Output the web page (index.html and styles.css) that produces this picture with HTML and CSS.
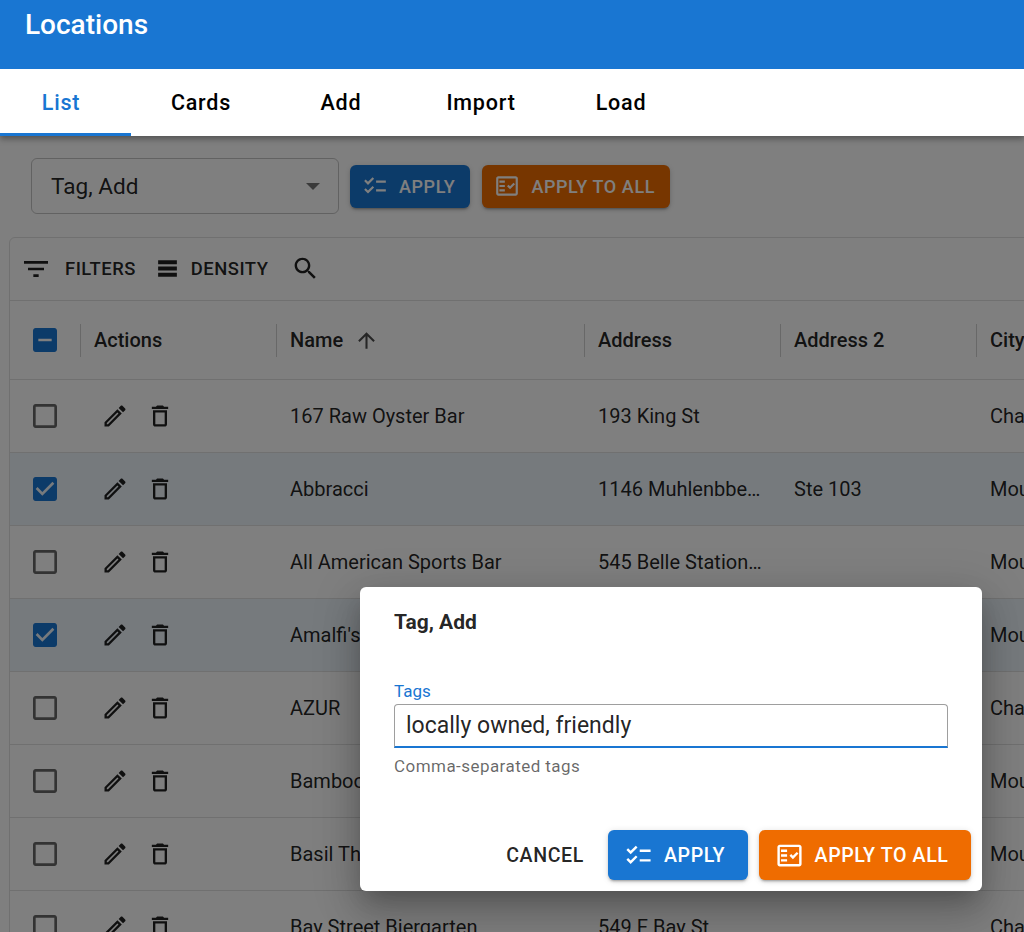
FILE: index.html
```html
<!DOCTYPE html>
<html lang="en">
<head>
  <meta charset="UTF-8">
  <title>Locations</title>
  <link rel="stylesheet" href="styles.css">
</head>
<body>
  <svg class="icon-defs" aria-hidden="true">
    <symbol id="i-edit" viewBox="0 0 24 24"><path d="m14.06 9.02.92.92L5.92 19H5v-.92l9.06-9.06M17.66 3c-.25 0-.51.1-.7.29l-1.83 1.83 3.75 3.75 1.83-1.83c.39-.39.39-1.02 0-1.41l-2.34-2.34c-.2-.2-.45-.29-.71-.29zm-3.6 3.19L3 17.25V21h3.75L17.81 9.94l-3.75-3.75z"/></symbol>
    <symbol id="i-delete" viewBox="0 0 24 24"><path d="M16 9v10H8V9h8m-1.5-6h-5l-1 1H5v2h14V4h-3.5l-1-1zM18 7H6v12c0 1.1.9 2 2 2h8c1.1 0 2-.9 2-2V7z"/></symbol>
    <symbol id="i-filter" viewBox="0 0 24 24"><path d="M10 18h4v-2h-4v2zM3 6v2h18V6H3zm3 7h12v-2H6v2z"/></symbol>
    <symbol id="i-density" viewBox="0 0 24 24"><path d="M21 8H3V4h18v4zm0 2H3v4h18v-4zm0 6H3v4h18v-4z"/></symbol>
    <symbol id="i-search" viewBox="0 0 24 24"><path d="M15.5 14h-.79l-.28-.27C15.41 12.59 16 11.11 16 9.5 16 5.91 13.09 3 9.5 3S3 5.91 3 9.5 5.91 16 9.5 16c1.61 0 3.09-.59 4.23-1.57l.27.28v.79l5 4.99L20.49 19l-4.99-5zm-6 0C7.01 14 5 11.99 5 9.5S7.01 5 9.5 5 14 7.01 14 9.5 11.99 14 9.5 14z"/></symbol>
    <symbol id="i-checklist" viewBox="0 0 24 24"><path d="M22 7h-9v2h9V7zm0 8h-9v2h9v-2zM5.54 11 2 7.46l1.41-1.41 2.12 2.12 4.24-4.24 1.41 1.41L5.54 11zm0 8L2 15.46l1.41-1.41 2.12 2.12 4.24-4.24 1.41 1.41L5.54 19z"/></symbol>
    <symbol id="i-fact" viewBox="0 0 24 24"><path d="M20 3H4c-1.1 0-2 .9-2 2v14c0 1.1.9 2 2 2h16c1.1 0 2-.9 2-2V5c0-1.1-.9-2-2-2zm0 16H4V5h16v14z"/><path d="M19.41 10.42 17.99 9l-3.17 3.17-1.41-1.42L12 12.16 14.82 15zM5 7h5v2H5zm0 4h5v2H5zm0 4h5v2H5z"/></symbol>
    <symbol id="i-arrow-up" viewBox="0 0 24 24"><path d="M4 12l1.41 1.41L11 7.83V20h2V7.83l5.58 5.59L20 12l-8-8-8 8z"/></symbol>
    <symbol id="i-box" viewBox="0 0 24 24"><path d="M19 5v14H5V5h14m0-2H5c-1.1 0-2 .9-2 2v14c0 1.1.9 2 2 2h14c1.1 0 2-.9 2-2V5c0-1.1-.9-2-2-2z"/></symbol>
    <symbol id="i-box-checked" viewBox="0 0 24 24"><path d="M19 3H5c-1.11 0-2 .9-2 2v14c0 1.1.89 2 2 2h14c1.11 0 2-.9 2-2V5c0-1.1-.89-2-2-2zm-9 14l-5-5 1.41-1.41L10 14.17l7.59-7.59L19 8l-9 9z"/></symbol>
    <symbol id="i-box-some" viewBox="0 0 24 24"><path d="M19 3H5c-1.1 0-2 .9-2 2v14c0 1.1.9 2 2 2h14c1.1 0 2-.9 2-2V5c0-1.1-.9-2-2-2zm-2 10H7v-2h10v2z"/></symbol>
  </svg>

  <div class="page">
    <main class="content">
      <div class="bulk-bar">
        <div class="select">
          <span>Tag, Add</span>
          <span class="select__caret"></span>
        </div>
        <button class="btn btn--blue"><svg class="btn__icon"><use href="#i-checklist"/></svg>Apply</button>
        <button class="btn btn--orange"><svg class="btn__icon"><use href="#i-fact"/></svg>Apply to all</button>
      </div>

      <section class="grid">
        <div class="grid__toolbar">
          <span class="tool"><svg class="tool__icon"><use href="#i-filter"/></svg>Filters</span>
          <span class="tool tool--density"><svg class="tool__icon"><use href="#i-density"/></svg>Density</span>
          <svg class="tool__icon tool__icon--search"><use href="#i-search"/></svg>
        </div>

        <div class="row row--head">
          <div class="cell cell--check"><svg class="check check--on"><use href="#i-box-some"/></svg></div>
          <div class="cell cell--actions">Actions</div>
          <div class="cell cell--name">Name<svg class="sort-icon"><use href="#i-arrow-up"/></svg></div>
          <div class="cell cell--addr">Address</div>
          <div class="cell cell--addr2">Address 2</div>
          <div class="cell cell--city">City</div>
        </div>

        <div class="row">
          <div class="cell cell--check"><svg class="check"><use href="#i-box"/></svg></div>
          <div class="cell cell--actions"><svg class="act act--edit"><use href="#i-edit"/></svg><svg class="act"><use href="#i-delete"/></svg></div>
          <div class="cell cell--name">167 Raw Oyster Bar</div>
          <div class="cell cell--addr">193 King St</div>
          <div class="cell cell--addr2"></div>
          <div class="cell cell--city">Charleston</div>
        </div>
        <div class="row row--selected">
          <div class="cell cell--check"><svg class="check check--on"><use href="#i-box-checked"/></svg></div>
          <div class="cell cell--actions"><svg class="act act--edit"><use href="#i-edit"/></svg><svg class="act"><use href="#i-delete"/></svg></div>
          <div class="cell cell--name">Abbracci</div>
          <div class="cell cell--addr">1146 Muhlenbbe…</div>
          <div class="cell cell--addr2">Ste 103</div>
          <div class="cell cell--city">Mount Pleasant</div>
        </div>
        <div class="row">
          <div class="cell cell--check"><svg class="check"><use href="#i-box"/></svg></div>
          <div class="cell cell--actions"><svg class="act act--edit"><use href="#i-edit"/></svg><svg class="act"><use href="#i-delete"/></svg></div>
          <div class="cell cell--name">All American Sports Bar</div>
          <div class="cell cell--addr">545 Belle Station…</div>
          <div class="cell cell--addr2"></div>
          <div class="cell cell--city">Mount Pleasant</div>
        </div>
        <div class="row row--selected">
          <div class="cell cell--check"><svg class="check check--on"><use href="#i-box-checked"/></svg></div>
          <div class="cell cell--actions"><svg class="act act--edit"><use href="#i-edit"/></svg><svg class="act"><use href="#i-delete"/></svg></div>
          <div class="cell cell--name">Amalfi's</div>
          <div class="cell cell--addr"></div>
          <div class="cell cell--addr2"></div>
          <div class="cell cell--city">Mount Pleasant</div>
        </div>
        <div class="row">
          <div class="cell cell--check"><svg class="check"><use href="#i-box"/></svg></div>
          <div class="cell cell--actions"><svg class="act act--edit"><use href="#i-edit"/></svg><svg class="act"><use href="#i-delete"/></svg></div>
          <div class="cell cell--name">AZUR</div>
          <div class="cell cell--addr"></div>
          <div class="cell cell--addr2"></div>
          <div class="cell cell--city">Charleston</div>
        </div>
        <div class="row">
          <div class="cell cell--check"><svg class="check"><use href="#i-box"/></svg></div>
          <div class="cell cell--actions"><svg class="act act--edit"><use href="#i-edit"/></svg><svg class="act"><use href="#i-delete"/></svg></div>
          <div class="cell cell--name">Bamboo</div>
          <div class="cell cell--addr"></div>
          <div class="cell cell--addr2"></div>
          <div class="cell cell--city">Mount Pleasant</div>
        </div>
        <div class="row">
          <div class="cell cell--check"><svg class="check"><use href="#i-box"/></svg></div>
          <div class="cell cell--actions"><svg class="act act--edit"><use href="#i-edit"/></svg><svg class="act"><use href="#i-delete"/></svg></div>
          <div class="cell cell--name">Basil Thai</div>
          <div class="cell cell--addr"></div>
          <div class="cell cell--addr2"></div>
          <div class="cell cell--city">Mount Pleasant</div>
        </div>
        <div class="row">
          <div class="cell cell--check"><svg class="check"><use href="#i-box"/></svg></div>
          <div class="cell cell--actions"><svg class="act act--edit"><use href="#i-edit"/></svg><svg class="act"><use href="#i-delete"/></svg></div>
          <div class="cell cell--name">Bay Street Biergarten</div>
          <div class="cell cell--addr">549 E Bay St</div>
          <div class="cell cell--addr2"></div>
          <div class="cell cell--city">Charleston</div>
        </div>
      </section>
    </main>

    <div class="backdrop"></div>

    <header class="topbar">
      <div class="appbar">Locations</div>
      <nav class="tabs">
        <a class="tab tab--active">List</a>
        <a class="tab">Cards</a>
        <a class="tab">Add</a>
        <a class="tab">Import</a>
        <a class="tab">Load</a>
      </nav>
    </header>

    <div class="dialog">
      <h2 class="dialog__title">Tag, Add</h2>
      <div class="field">
        <label class="field__label">Tags</label>
        <div class="field__input">locally owned, friendly</div>
        <div class="field__help">Comma-separated tags</div>
      </div>
      <div class="dialog__actions">
        <button class="btn btn--text">Cancel</button>
        <button class="btn btn--blue btn--big"><svg class="btn__icon"><use href="#i-checklist"/></svg>Apply</button>
        <button class="btn btn--orange btn--big"><svg class="btn__icon"><use href="#i-fact"/></svg>Apply to all</button>
      </div>
    </div>
  </div>
</body>
</html>
```

FILE: styles.css
```css
* {
  box-sizing: border-box;
  font-family: Roboto, "Liberation Sans", sans-serif;
}
html, body {
  margin: 0;
  height: 100%;
  overflow: hidden;
}
.icon-defs {
  display: none;
}
svg {
  fill: currentColor;
  flex-shrink: 0;
}
.page {
  position: relative;
  height: 932px;
  overflow: hidden;
  background: #fff;
  color: rgba(0, 0, 0, .87);
}

/* top bar sits above the backdrop */
.topbar {
  position: absolute;
  top: 0;
  left: 0;
  right: 0;
  z-index: 3;
  box-shadow: 0 3px 6px rgba(0, 0, 0, .35);
}
.appbar {
  height: 69px;
  padding: 8px 0 0 25px;
  background: #1976d2;
  color: #fff;
  font-size: 28px;
  font-weight: 500;
  line-height: 33px;
}
.tabs {
  display: flex;
  height: 67px;
  margin-left: -9px;
  background: #fff;
}
.tab {
  width: 140px;
  display: flex;
  align-items: center;
  justify-content: center;
  padding-top: 2px;
  color: #000;
  font-size: 21.5px;
  font-weight: 500;
  letter-spacing: .8px;
  border-bottom: 3px solid transparent;
}
.tab--active {
  color: #1976d2;
  border-bottom-color: #1976d2;
}

/* page under the backdrop */
.content {
  padding: 158px 0 0 9px;
  width: 1300px;
}
.bulk-bar {
  display: flex;
  align-items: center;
  gap: 11px;
  margin-left: 22px;
  height: 56px;
}
.select {
  width: 308px;
  height: 56px;
  display: flex;
  align-items: center;
  justify-content: space-between;
  padding: 0 18px 0 19px;
  border: 1px solid rgba(0, 0, 0, .23);
  border-radius: 6px;
  font-size: 22.6px;
}
.select__caret {
  width: 0;
  height: 0;
  border-left: 7px solid transparent;
  border-right: 7px solid transparent;
  border-top: 7px solid rgba(0, 0, 0, .54);
}
.btn {
  display: flex;
  align-items: center;
  gap: 11px;
  height: 43px;
  padding: 0 15px 0 12px;
  border: 0;
  border-radius: 6px;
  color: #fff;
  font-size: 18px;
  font-weight: 500;
  letter-spacing: .6px;
  text-transform: uppercase;
  box-shadow: 0 3px 2px -2px rgba(0, 0, 0, .2), 0 2px 3px rgba(0, 0, 0, .14), 0 1px 7px rgba(0, 0, 0, .12);
}
.btn--blue {
  background: #1976d2;
}
.btn--orange {
  background: #ef6c00;
  margin-left: 1px;
}
.btn--text {
  background: none;
  box-shadow: none;
  color: rgba(0, 0, 0, .87);
  padding: 0;
  margin-right: 13px;
  font-size: 19.6px;
}
.btn--big {
  height: 50px;
  padding: 0 22.5px 0 16.5px;
  gap: 10.5px;
  font-size: 19.6px;
}
.btn__icon {
  width: 26px;
  height: 26px;
}
.btn--big .btn__icon {
  width: 29px;
  height: 29px;
}
.dialog__actions .btn--orange {
  margin-left: 0;
}

.grid {
  margin-top: 23px;
  border: 1px solid rgba(224, 224, 224, 1);
  border-radius: 6px;
}
.grid__toolbar {
  display: flex;
  align-items: center;
  height: 63px;
  padding: 0 0 1px 10px;
  border-bottom: 1px solid #e0e0e0;
}
.tool {
  display: flex;
  align-items: center;
  gap: 13px;
  font-size: 18.4px;
  font-weight: 500;
  letter-spacing: .5px;
  text-transform: uppercase;
}
.tool--density {
  margin-left: 19px;
  gap: 11px;
}
.tool__icon {
  width: 32px;
  height: 32px;
}
.tool--density .tool__icon {
  width: 25px;
  height: 25px;
}
.tool__icon--search {
  margin-left: 23px;
  width: 29px;
  height: 29px;
}
.row {
  display: flex;
  height: 73px;
  border-bottom: 1px solid #e0e0e0;
}
.row--head {
  height: 79px;
  font-weight: 500;
}
.row--selected {
  background: rgba(25, 118, 210, .08);
}
.cell {
  position: relative;
  display: flex;
  align-items: center;
  padding-left: 14px;
  font-size: 20px;
  white-space: nowrap;
}
.row--head .cell:not(.cell--check)::before {
  content: "";
  position: absolute;
  left: 0;
  top: 23px;
  height: 33px;
  width: 1px;
  background: #d0d0d0;
}
.cell--check {
  width: 70px;
  padding-left: 19px;
}
.cell--actions {
  width: 196px;
  padding-left: 21px;
}
.row--head .cell--actions {
  padding-left: 14px;
}
.cell--name {
  width: 308px;
}
.cell--addr,
.cell--addr2 {
  width: 196px;
}
.cell--city {
  width: 200px;
}
.check {
  width: 32px;
  height: 32px;
  color: rgba(0, 0, 0, .6);
}
.check--on {
  color: #1976d2;
}
.act {
  width: 28px;
  height: 28px;
}
.act--edit {
  margin-right: 17px;
}
.sort-icon {
  width: 25px;
  height: 25px;
  margin-left: 11px;
  color: rgba(0, 0, 0, .7);
}

.backdrop {
  position: absolute;
  inset: 0;
  z-index: 2;
  background: rgba(0, 0, 0, .5);
}

/* dialog */
.dialog {
  position: absolute;
  z-index: 4;
  left: 360px;
  top: 587px;
  width: 622px;
  height: 304px;
  display: flex;
  flex-direction: column;
  background: #fff;
  border-radius: 6px;
  box-shadow: 0 11px 20px -7px rgba(0, 0, 0, .2), 0 24px 38px 3px rgba(0, 0, 0, .14), 0 9px 46px 8px rgba(0, 0, 0, .12);
}
.dialog__title {
  margin: 0;
  padding: 23px 34px 0;
  font-size: 21px;
  font-weight: 700;
  line-height: 25px;
}
.field {
  padding: 47px 34px 0;
}
.field__label {
  display: block;
  height: 22px;
  color: #1976d2;
  font-size: 17px;
  line-height: 19px;
}
.field__input {
  height: 44px;
  padding-left: 11px;
  border: 1px solid #9e9e9e;
  border-bottom: 2px solid #1976d2;
  border-radius: 4px 4px 0 0;
  color: rgba(0, 0, 0, .87);
  font-size: 23px;
  line-height: 42px;
}
.field__help {
  margin-top: 8px;
  color: rgba(0, 0, 0, .6);
  font-size: 17px;
  letter-spacing: .45px;
  line-height: 20px;
}
.dialog__actions {
  display: flex;
  align-items: center;
  justify-content: flex-end;
  gap: 11px;
  margin-top: auto;
  padding: 0 11px 11px 0;
}
```
